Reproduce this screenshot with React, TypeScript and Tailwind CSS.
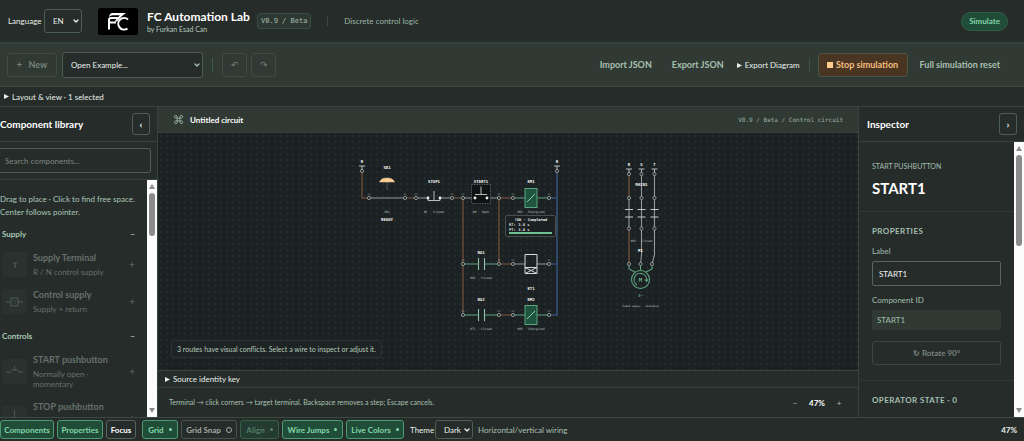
import type { ReactNode } from 'react';
import { ChevronDown } from 'lucide-react';

interface LibraryItem {
  name: string;
  detail: string;
  icon: ReactNode;
}

const SUPPLY_ITEMS: LibraryItem[] = [
  {
    name: 'Supply Terminal',
    detail: 'R / N control supply',
    icon: <path d="M11 11h4M13 11v4M12 15h2" />,
  },
  {
    name: 'Control supply',
    detail: 'Supply + return',
    icon: <path d="M4 13h5M16 13h5M9 9h7v8H9zM11 12h1M13 14h1M13 11v1" />,
  },
];

const CONTROL_ITEMS: LibraryItem[] = [
  {
    name: 'START pushbutton',
    detail: 'Normally open · momentary',
    icon: <path d="M4 13h5M16 13h5M9 11h7M12.5 7v4" />,
  },
  {
    name: 'STOP pushbutton',
    detail: 'Normally closed · momentary',
    icon: <path d="M4 13h5M16 13h5M9 14h7M12.5 4v10" />,
  },
];

export default function App() {
  return (
    <div className="flex h-screen flex-col overflow-hidden bg-[#262c2a] font-['Lato','Noto_Sans',sans-serif] text-[8px] text-[#e8f0ea]">
      <Header />
      <Toolbar />
      <details className="h-5 shrink-0 border-b border-[#35443c] px-1">
        <summary className="flex h-full items-center gap-[3px] leading-none">
          <Triangle /> Layout &amp; view · 1 selected
        </summary>
      </details>
      <main className="flex min-h-0 flex-1">
        <Library />
        <Workspace />
        <Inspector />
      </main>
      <Footer />
    </div>
  );
}

function Triangle() {
  return (
    <svg width="5" height="5" viewBox="0 0 5 5" className="shrink-0" fill="currentColor">
      <path d="M0 0l5 2.5L0 5z" />
    </svg>
  );
}

function Select({ label, value, className }: { label: string; value: string; className: string }) {
  return (
    <div className={`relative shrink-0 ${className}`}>
      <select
        aria-label={label}
        className="h-full w-full appearance-none rounded-[3px] border border-[#4c5f55] bg-[#262c2a] pl-[8px] text-[8px] text-[#e8f0ea]"
      >
        <option>{value}</option>
      </select>
      <ChevronDown size={8} strokeWidth={4} className="pointer-events-none absolute top-1/2 right-[2px] -translate-y-1/2" />
    </div>
  );
}

function Header() {
  return (
    <header className="flex h-11 shrink-0 items-center border-b-2 border-[#33423a] px-2 pr-4">
      <span className="w-9">Language</span>
      <Select label="Language" value="EN" className="h-6 w-[38px]" />
      <svg viewBox="0 0 40 27" className="ml-4 h-[27px] w-10 shrink-0">
        <rect width="40" height="27" rx="2.5" fill="#000" />
        <g fill="none" stroke="#fff" strokeWidth="2">
          <path d="M11 21.500V12Q11 10 13 10H21" />
          <path d="M12 14.500H18" />
          <path d="M30 11.500A5.800 5.800 0 1 0 29.500 20.500" />
        </g>
        <path d="M14 5H28L25 7.200H14.500Q12.500 7.200 11 9Q11.500 5.500 14 5z" fill="#fff" />
        <path d="M25 7L19 13.500H16.500L22 7z" fill="#fff" />
      </svg>
      <div className="ml-[9px] w-[102px] whitespace-nowrap">
        <h1 className="text-[12px] leading-[15px] font-bold text-white">FC Automation Lab</h1>
        <p className="text-[7px] leading-[10px] text-[#b5cabc]">by Furkan Esad Can</p>
      </div>
      <span className="ml-2 rounded-[3px] border border-[#3a4d43] bg-[#2d3833] px-[3px] font-['DejaVu_Sans_Mono',monospace] text-[7px] leading-[14px] text-[#a3bfae]">
        V0.9 / Beta
      </span>
      <span className="ml-4 h-[10px] w-px bg-[#3a4a42]" />
      <span className="ml-4 text-[#9db5a6]">Discrete control logic</span>
      <span className="ml-auto rounded-full border border-[#306049] bg-[#1f4d38] px-[7px] leading-[17px] font-bold text-[#84d6a8]">
        Simulate
      </span>
    </header>
  );
}

function Toolbar() {
  return (
    <div className="flex h-[43px] shrink-0 items-center border-b border-[#3a4a42] bg-[#303934] pr-[24px] pl-[7px] text-[9px] font-bold text-[#a9c0b1]">
      <button className="h-6 w-[50px] rounded-[3px] border border-[#3f4b45] text-[#75827a]">+&nbsp;&nbsp; New</button>
      <Select label="Open example" value="Open Example..." className="ml-[5px] h-[26px] w-[141px] font-normal" />
      <span className="ml-[9px] h-[14px] w-px bg-[#3d5a4b]" />
      <button aria-label="Undo" className="ml-[9px] h-6 w-[25px] rounded-[3px] border border-[#3f4b45] font-normal text-[#75827a]">↶</button>
      <button aria-label="Redo" className="ml-[4px] h-6 w-[25px] rounded-[3px] border border-[#3f4b45] font-normal text-[#75827a]">↷</button>
      <div className="ml-auto flex items-center">
        <button>Import JSON</button>
        <button className="ml-[20px]">Export JSON</button>
        <details className="ml-[13px]">
          <summary className="flex items-center gap-[3px] text-[8px] font-normal text-[#e8f0ea]">
            <Triangle /> Export Diagram
          </summary>
        </details>
        <span className="ml-[9px] h-[14px] w-px bg-[#3f5047]" />
        <button className="ml-2 flex h-6 w-[90px] items-center justify-center gap-[3px] rounded-[3px] border border-[#4a5444] bg-[#4a3523] text-[#f5bd7d]">
          <span className="size-[6px] bg-[#ffce8f]" /> Stop simulation
        </button>
        <button className="ml-[12px]">Full simulation reset</button>
      </div>
    </div>
  );
}

function ScrollBar({ thumb }: { thumb: string }) {
  return (
    <div className="flex w-[10px] shrink-0 flex-col items-center bg-[#fcfcfc] py-1 text-[#8b8b8b]">
      <svg width="6" height="5" viewBox="0 0 6 5" fill="currentColor"><path d="M3 0l3 5H0z" /></svg>
      <div className={`mt-1 w-[6px] rounded-full bg-[#8b8b8b] ${thumb}`} />
      <svg width="6" height="5" viewBox="0 0 6 5" fill="currentColor" className="mt-auto"><path d="M0 0h6L3 5z" /></svg>
    </div>
  );
}

function Library() {
  return (
    <aside className="flex w-[157px] shrink-0 flex-col">
      <div className="flex h-[35px] shrink-0 items-center justify-between border-b border-[#35443c] pr-[7px]">
        <h2 className="text-[10px] font-bold text-white">Component library</h2>
        <button aria-label="Collapse library" className="h-[22px] w-[18px] rounded-[3px] border border-[#4c5f55] text-[10px] leading-none font-bold">‹</button>
      </div>
      <div className="h-[38px] shrink-0 border-b border-[#35443c] py-[6px] pr-[6px]">
        <input
          aria-label="Search components"
          placeholder="Search components..."
          className="h-[25px] w-full rounded-r-[3px] border border-l-0 border-[#4c5f55] pl-[5px] placeholder:text-[#7b8780]"
        />
      </div>
      <div className="flex min-h-0 flex-1">
        <div className="min-w-0 flex-1 overflow-hidden pt-[13px]">
          <p className="leading-[13px] text-[#a9c7b5]">Drag to place · Click to find free space. Center follows pointer.</p>
          <LibraryGroup title="Supply" items={SUPPLY_ITEMS} className="mt-[9px]" />
          <LibraryGroup title="Controls" items={CONTROL_ITEMS} className="mt-[16px]" />
        </div>
        <ScrollBar thumb="h-[43px]" />
      </div>
    </aside>
  );
}

function LibraryGroup({ title, items, className }: { title: string; items: LibraryItem[]; className: string }) {
  return (
    <section className={`px-[2px] ${className}`}>
      <h3 className="mb-[10px] flex justify-between pr-[10px] leading-[13px] font-bold text-[#a9c7b5]">
        {title} <span>−</span>
      </h3>
      <div className="flex flex-col gap-[11px]">
        {items.map((item) => (
          <button key={item.name} className="flex items-center text-left text-[#65716a]">
            <svg viewBox="0 0 25 25" className="size-[25px] shrink-0" fill="none" stroke="#58655e" strokeWidth="0.8">
              <rect width="25" height="25" rx="3" fill="#29322e" stroke="none" />
              {item.icon}
            </svg>
            <span className="ml-[6px] w-[80px]">
              <span className="block text-[9px] leading-[14px] font-bold whitespace-nowrap">{item.name}</span>
              <span className="mt-[2px] block text-[8px] leading-[10px]">{item.detail}</span>
            </span>
            <span className="ml-auto pr-[10px] text-[10px]">+</span>
          </button>
        ))}
      </div>
    </section>
  );
}

function Workspace() {
  return (
    <section className="flex min-w-0 flex-1 flex-col border-x border-[#35443c]">
      <div className="flex h-[26px] shrink-0 items-center border-b border-[#35443c] bg-[#303934] px-[15px]">
        <svg viewBox="0 0 24 24" className="size-[11px]" fill="none" stroke="#a3bfae" strokeWidth="1.800">
          <path d="M15 6v12a3 3 0 1 0 3-3H6a3 3 0 1 0 3 3V6a3 3 0 1 0-3 3h12a3 3 0 1 0-3-3" />
        </svg>
        <h2 className="ml-[6px] font-bold text-white">Untitled circuit</h2>
        <span className="ml-auto font-['DejaVu_Sans_Mono',monospace] text-[6px] text-[#9db5a6]">V0.9 / Beta / Control circuit</span>
      </div>
      <div className="relative min-h-0 flex-1 bg-[#1c2123] bg-[radial-gradient(circle_at_center,#2b3334_0.5px,transparent_1px)] bg-[size:6px_6px]">
        <Circuit />
        <p className="absolute bottom-[12px] left-[13px] rounded-[3px] border border-[#2b3330] bg-[#1e2324] px-[5px] text-[7px] leading-[16px] text-[#b5cabc]">
          3 routes have visual conflicts. Select a wire to inspect or adjust it.
        </p>
      </div>
      <details className="h-[18px] shrink-0 border-y border-[#35443c] px-[7px]">
        <summary className="flex h-full items-center gap-[3px] leading-none">
          <Triangle /> Source identity key
        </summary>
      </details>
      <div className="flex h-[29px] shrink-0 items-center px-[11px] text-[#a9c0b1]">
        <p className="flex-1 text-[7px]">Terminal → click corners → target terminal. Backspace removes a step; Escape cancels.</p>
        <button aria-label="Zoom out" className="w-4">−</button>
        <span className="w-7 text-center font-bold text-white">47%</span>
        <button aria-label="Zoom in" className="w-4">+</button>
      </div>
    </section>
  );
}

const GREY = '#909b97';
const BROWN = '#84583f';
const BLUE = '#3e6398';
const GREEN = '#5da57f';

function Terminal({ x, y }: { x: number; y: number }) {
  return <circle cx={x} cy={y} r="1.6" fill="#1c2123" stroke="#a5b0aa" strokeWidth="0.8" />;
}

function Wire({ d, color }: { d: string; color: string }) {
  return <path d={d} stroke={color} strokeWidth="1.100" fill="none" />;
}

function Tag({ x, y, children, faint }: { x: number; y: number; children: ReactNode; faint?: boolean }) {
  return (
    <text
      x={x}
      y={y}
      textAnchor="middle"
      fontSize={faint ? 3 : 4}
      fontWeight={faint ? 400 : 700}
      fill={faint ? '#b5c5bb' : '#f2f5f3'}
    >
      {children}
    </text>
  );
}

function Coil({ x, y }: { x: number; y: number }) {
  return (
    <g stroke={GREEN}>
      <rect x={x - 6} y={y - 9.5} width="12" height="19" fill="#1f5440" />
      <path d={`M${x - 4} ${y + 4}l8 -8`} stroke="#8fd0aa" />
    </g>
  );
}

function Supply({ x, y, name }: { x: number; y: number; name: string }) {
  return (
    <g>
      <Tag x={x} y={y - 8.5}>{name}</Tag>
      <path d={`M${x - 3} ${y - 5}h6M${x} ${y - 5}v5`} stroke="#b4bfb9" />
      <Terminal x={x} y={y} />
    </g>
  );
}

const TERMINALS = [
  [369, 198], [405, 198], [416, 198], [452, 198], [463, 198], [499, 198], [513, 198], [549, 198],
  [463, 264], [499, 264], [513, 264], [549, 264],
  [463, 315], [499, 315], [513, 315], [549, 315],
];

const PHASES = [
  { name: 'R', x: 629, motorX: 629, color: BROWN },
  { name: 'S', x: 641.5, motorX: 640.5, color: GREY },
  { name: 'T', x: 654.5, motorX: 652, color: GREY },
];

function Circuit() {
  return (
    <svg
      viewBox="158 133 700 237"
      className="block h-full w-full font-['DejaVu_Sans_Mono',monospace]"
      textRendering="geometricPrecision"
      role="img"
      aria-label="Control circuit"
    >
      {/* control wiring */}
      <Wire color={BROWN} d="M362 171V198H369M405 198H416M452 198H463V315M499 198V264M499 198H513M499 264H513M499 315H513" />
      <Wire color={BLUE} d="M557 171V315H549M549 198H557M549 264H557" />
      <Wire color={GREY} d="M369 198H405M416 198H428M440 198H452M463 198H475M487 198H499M513 264H525M537 264H549" />
      <Wire color={GREEN} d="M513 198H525M537 198H549M463 264H478M484 264H499M463 315H478M484 315H499M513 315H525M537 315H549" />
      <Supply x={362} y={171} name="R" />
      <Supply x={557} y={171} name="N" />

      {/* emergency button */}
      <path d="M379.500 182Q381 178 387 178Q393 178 394.500 182z" fill="#ffc98a" stroke="#e5d3b5" strokeWidth="0.5" />
      <path d="M387 182v8" stroke="#6d7772" strokeDasharray="1.5 1" />
      <Tag x={387} y={168.500}>SB1</Tag>
      <Tag x={387} y={212.500} faint>SB1</Tag>
      <Tag x={387} y={221}>READY</Tag>

      {/* stop */}
      <path d="M428 198V200.500H440V198M434 191V200" stroke="#b4bfb9" fill="none" />
      <circle cx="428" cy="198" r="1.400" fill="#eef2ef" />
      <circle cx="440" cy="198" r="1.400" fill="#eef2ef" />
      <Tag x={434} y={182.500}>STOP1</Tag>
      <Tag x={434} y={212.500} faint>NC · Closed</Tag>

      {/* start */}
      <rect x="471.500" y="184.500" width="19" height="19" fill="#101313" stroke="#6d7772" strokeWidth="0.7" strokeDasharray="1.500 1" />
      <path d="M475 194.500H487M481 186.500V194.500" stroke="#b4bfb9" />
      <circle cx="475" cy="198" r="1.400" fill="#eef2ef" />
      <circle cx="487" cy="198" r="1.400" fill="#eef2ef" />
      <Tag x={481} y={182.500}>START1</Tag>
      <Tag x={481} y={212.500} faint>NO · Open</Tag>

      {/* coils and timer */}
      <Coil x={531} y={198} />
      <Tag x={531} y={182.500}>KM1</Tag>
      <Tag x={531} y={212.500} faint>KM1 · Energized</Tag>
      <Coil x={531} y={315} />
      <Tag x={531} y={300.500}>KM2</Tag>
      <Tag x={531} y={329.500} faint>KM2 · Energized</Tag>
      <path d="M525 254.500H537V273.500H525zM525 267.500H537M525 267.500L537 273.500M537 267.500L525 273.500" stroke="#d5dcd8" fill="none" />
      <Tag x={531} y={290}>KT1</Tag>
      <rect x="505.500" y="215.500" width="50" height="21" rx="1.500" fill="#1b2022" stroke="#46514c" />
      <text x="531" y="220.500" textAnchor="middle" fontSize="3.600" fontWeight="700" fill="#f2f5f3">TON · Completed</text>
      <g fontSize="3.800" fontWeight="700" fill="#d5dcd8">
        <text x="509" y="225.500">RT: 3.0 s</text>
        <text x="509" y="230.500">PT: 3.0 s</text>
      </g>
      <rect x="509" y="232" width="43" height="2" fill="#6fbf93" />

      {/* contacts */}
      <Wire color="#8fc0a5" d="M478.500 258V270M484.500 258V270M478.500 309V321M484.500 309V321" />
      <Tag x={481} y={253.500}>NO1</Tag>
      <Tag x={481} y={278.500} faint>KM1 · Closed</Tag>
      <Tag x={481} y={300.500}>NO2</Tag>
      <Tag x={481} y={329.500} faint>KT1 · Closed</Tag>

      {TERMINALS.map(([x, y]) => (
        <g key={`${x}-${y}`}>
          <Terminal x={x} y={y} />
          <text x={x} y={y - 3.500} textAnchor="middle" fontSize="2.400" fill="#8fa396">{x % 2 ? 'A1' : 'A2'}</text>
        </g>
      ))}

      {/* three phase motor */}
      {PHASES.map(({ name, x, motorX, color }) => (
        <g key={name}>
          <Wire color={color} d={`M${x} 174V198M${x} 228V255L${motorX} 264`} />
          <Wire color={GREY} d={`M${x} 198V228`} />
          <path d={`M${x - 4} 209.500h8M${x - 4} 217h8`} stroke="#c3ccc7" />
          <Supply x={x} y={174} name={name} />
          <Terminal x={x} y={198} />
          <Terminal x={x} y={228.5} />
        </g>
      ))}
      <Tag x={641.5} y={186}>MAIN1</Tag>
      <Tag x={641.5} y={241.500} faint>KM1 · Closed</Tag>
      <Tag x={640.5} y={252}>M1</Tag>
      <g fill="none" stroke={GREEN} strokeWidth="1.100">
        <path d="M629 264V269L635 272M640.500 264V270M652 264V269L646 272" />
        <circle cx="640.500" cy="279.500" r="9" />
        <path d="M637 285A6.300 6.300 0 1 1 646.500 281" />
        <path d="M644.500 279.500h4L646.500 282.500z" fill={GREEN} stroke="none" />
      </g>
      <text x="640.500" y="281.500" textAnchor="middle" fontSize="5.500" fill="#84d6a8">M</text>
      <text x="640.500" y="296.500" textAnchor="middle" fontSize="4" fill="#84d6a8">3~</text>
      {PHASES.map(({ name, motorX }) => <Terminal key={name} x={motorX} y={264} />)}
      <text x="640.500" y="307" textAnchor="middle" fontSize="2.500" fill="#d5dcd8">Field supply · reference</text>
    </svg>
  );
}

function Inspector() {
  return (
    <aside className="flex w-[165px] shrink-0 flex-col">
      <div className="flex h-[35px] shrink-0 items-center justify-between border-b border-[#35443c] pr-[7px] pl-2">
        <h2 className="text-[10px] font-bold text-white">Inspector</h2>
        <button aria-label="Collapse inspector" className="h-[22px] w-[18px] rounded-[3px] border border-[#4c5f55] text-[10px] leading-none font-bold">›</button>
      </div>
      <div className="flex min-h-0 flex-1">
        <div className="min-w-0 flex-1 overflow-hidden text-[#a3bfae]">
          <div className="border-b border-[#2f3833] px-[13px] pt-[18px] pb-[13px]">
            <p className="text-[7px] leading-[12px]">START PUSHBUTTON</p>
            <h3 className="mt-[6px] text-[15px] leading-[20px] font-bold text-white">START1</h3>
          </div>
          <div className="flex flex-col border-b border-[#2f3833] px-[13px] pt-[13px] pb-[15px]">
            <h4 className="leading-[12px] font-bold tracking-wider">PROPERTIES</h4>
            <label htmlFor="label" className="mt-[9px] leading-[11px]">Label</label>
            <input id="label" defaultValue="START1" className="mt-[4px] h-[25px] rounded-[2px] border border-[#56685e] px-[6px] text-[#f0f5f1]" />
            <label htmlFor="component-id" className="mt-[8px] leading-[12px]">Component ID</label>
            <input id="component-id" readOnly value="START1" className="mt-[4px] h-[20px] rounded-[2px] bg-[#303934] px-[5px]" />
            <button className="mt-[11px] h-[24px] rounded-[3px] border border-[#3c4742] font-bold text-[#77837c]">↻ Rotate 90°</button>
          </div>
          <h4 className="px-[13px] pt-[13px] leading-[12px] font-bold tracking-wider">OPERATOR STATE · 0</h4>
        </div>
        <ScrollBar thumb="h-[91px]" />
      </div>
    </aside>
  );
}

const ON = 'border-[#4e9a72] bg-[#1f4d38] text-[#84d6a8]';
const OFF = 'border-[#46524c] text-[#a0aaa4]';

function FooterButton({ children, className }: { children: ReactNode; className: string }) {
  return (
    <button className={`flex h-[19px] shrink-0 items-center justify-center rounded-[3px] border font-bold whitespace-nowrap ${className}`}>
      {children}
    </button>
  );
}

function Dot() {
  return <span className="ml-[5px] size-[3px] rounded-full bg-current" />;
}

function Footer() {
  return (
    <footer className="flex h-6 shrink-0 items-center gap-[3px] border-t border-[#3a4a42] pr-[7px]">
      <FooterButton className={`w-[54px] ${ON}`}>Components</FooterButton>
      <FooterButton className={`w-[46px] ${ON}`}>Properties</FooterButton>
      <FooterButton className="mr-[3px] w-[30px] border-[#56625c] text-white">Focus</FooterButton>
      <FooterButton className={`w-[36px] ${ON}`}>Grid <Dot /></FooterButton>
      <FooterButton className={`w-[56px] ${OFF}`}>
        Grid Snap <span className="ml-[5px] size-[6px] rounded-full border border-current" />
      </FooterButton>
      <FooterButton className="w-[39px] border-[#37604b] bg-[#233b31] text-[#557d69]">Align <Dot /></FooterButton>
      <FooterButton className={`w-[61px] ${ON}`}>Wire Jumps <Dot /></FooterButton>
      <FooterButton className={`w-[58px] ${ON}`}>Live Colors <Dot /></FooterButton>
      <span className="ml-[3px] w-[22px] shrink-0">Theme</span>
      <Select label="Theme" value="Dark" className="h-[19px] w-[38px]" />
      <span className="ml-[2px] text-[#a9c0b1]">Horizontal/vertical wiring</span>
      <span className="ml-auto font-bold">47%</span>
    </footer>
  );
}
